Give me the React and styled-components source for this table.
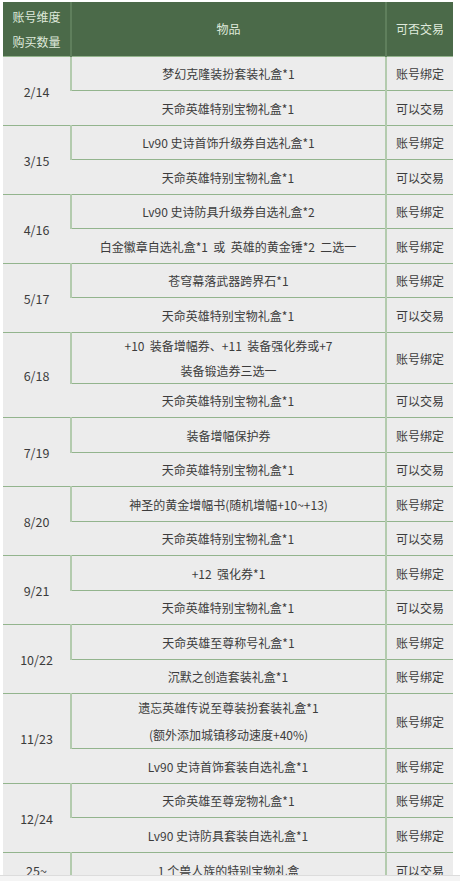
import React from "react";
import styled, { createGlobalStyle } from "styled-components";

const Global = createGlobalStyle`
  html, body { margin: 0; padding: 0; background: #ffffff; }
  body { font-family: "Noto Sans CJK SC", "Microsoft YaHei", sans-serif; }
`;

const Page = styled.div`
  width: 460px;
  height: 881px;
  overflow: hidden;
  background: #f4f4f4;
`;

const Viewport = styled.div`
  height: 876px;
  overflow: hidden;
  background: #ffffff;
  border-bottom: 1px solid #dcdcdc;
  padding: 2px 7px 0 3px;
  box-sizing: border-box;
`;

const Table = styled.table`
  width: 450px;
  table-layout: fixed;
  border-collapse: collapse;
  font-size: 12px;
  color: #3c3c3c;
`;

const HeadCell = styled.th`
  box-sizing: border-box;
  background: #4b6a49;
  color: #dfe9db;
  font-weight: normal;
  height: 54px;
  line-height: 25px;
  padding: 0;
  text-align: center;
  border-left: 2px solid #5f7f5c;
  &:first-child { border-left: none; }
`;

const Cell = styled.td`
  box-sizing: border-box;
  background: #ececec;
  text-align: center;
  padding: ${(p) => (p.$lh ? "0" : "2px 0 0")};
  white-space: nowrap;
  line-height: ${(p) => (p.$lh ? `${p.$lh}px` : "18px")};
  height: ${(p) => p.$h}px;
  border-top: 1px solid #93b48d;
  border-left: 2px solid #b3cbae;
  &:first-child { border-left: none; }
`;

const QtyCell = styled(Cell)`
  font-size: 12.5px;
`;

const S = "\u00a0";

const data = [
  { q: "2/14", rows: [["梦幻克隆装扮套装礼盒*1", "账号绑定"], ["天命英雄特别宝物礼盒*1", "可以交易"]] },
  { q: "3/15", rows: [["Lv90 史诗首饰升级券自选礼盒*1", "账号绑定"], ["天命英雄特别宝物礼盒*1", "可以交易"]] },
  { q: "4/16", rows: [["Lv90 史诗防具升级券自选礼盒*2", "账号绑定"], [`白金徽章自选礼盒*1${S} 或${S} 英雄的黄金锤*2${S} 二选一`, "账号绑定"]] },
  { q: "5/17", rows: [["苍穹幕落武器跨界石*1", "账号绑定"], ["天命英雄特别宝物礼盒*1", "可以交易"]] },
  { q: "6/18", rows: [[[`+10${S} 装备增幅券、+11${S} 装备强化券或+7`, "装备锻造券三选一"], "账号绑定", 51, 25], ["天命英雄特别宝物礼盒*1", "可以交易"]] },
  { q: "7/19", rows: [["装备增幅保护券", "账号绑定"], ["天命英雄特别宝物礼盒*1", "可以交易"]] },
  { q: "8/20", rows: [["神圣的黄金增幅书(随机增幅+10~+13)", "账号绑定"], ["天命英雄特别宝物礼盒*1", "可以交易"]] },
  { q: "9/21", rows: [[`+12${S} 强化券*1`, "账号绑定"], ["天命英雄特别宝物礼盒*1", "可以交易"]] },
  { q: "10/22", rows: [["天命英雄至尊称号礼盒*1", "账号绑定"], ["沉默之创造套装礼盒*1", "账号绑定"]] },
  { q: "11/23", rows: [[["遗忘英雄传说至尊装扮套装礼盒*1", "(额外添加城镇移动速度+40%)"], "账号绑定", 54, 27], ["Lv90 史诗首饰套装自选礼盒*1", "账号绑定"]] },
  { q: "12/24", rows: [["天命英雄至尊宠物礼盒*1", "账号绑定"], ["Lv90 史诗防具套装自选礼盒*1", "账号绑定"]] },
  { q: "25~", rows: [[`1 个兽人族的特别宝物礼盒`, "可以交易"]] },
];

const renderItem = (item) =>
  Array.isArray(item)
    ? item.map((line, i) => (
        <React.Fragment key={i}>
          {i > 0 && <br />}
          {line}
        </React.Fragment>
      ))
    : item;

export default function App() {
  return (
    <Page>
      <Global />
      <Viewport>
        <Table>
          <colgroup>
            <col style={{ width: 68 }} />
            <col style={{ width: 315 }} />
            <col style={{ width: 67 }} />
          </colgroup>
          <thead>
            <tr>
              <HeadCell>
                账号维度
                <br />
                购买数量
              </HeadCell>
              <HeadCell>物品</HeadCell>
              <HeadCell>可否交易</HeadCell>
            </tr>
          </thead>
          <tbody>
            {data.map((g) =>
              g.rows.map(([item, trade, h, lh], i) => (
                <tr key={g.q + i}>
                  {i === 0 && (
                    <QtyCell rowSpan={g.rows.length} $h={34.5}>
                      {g.q}
                    </QtyCell>
                  )}
                  <Cell $h={h || 34.5} $lh={lh}>
                    {renderItem(item)}
                  </Cell>
                  <Cell $h={h || 34.5}>{trade}</Cell>
                </tr>
              ))
            )}
          </tbody>
        </Table>
      </Viewport>
    </Page>
  );
}
